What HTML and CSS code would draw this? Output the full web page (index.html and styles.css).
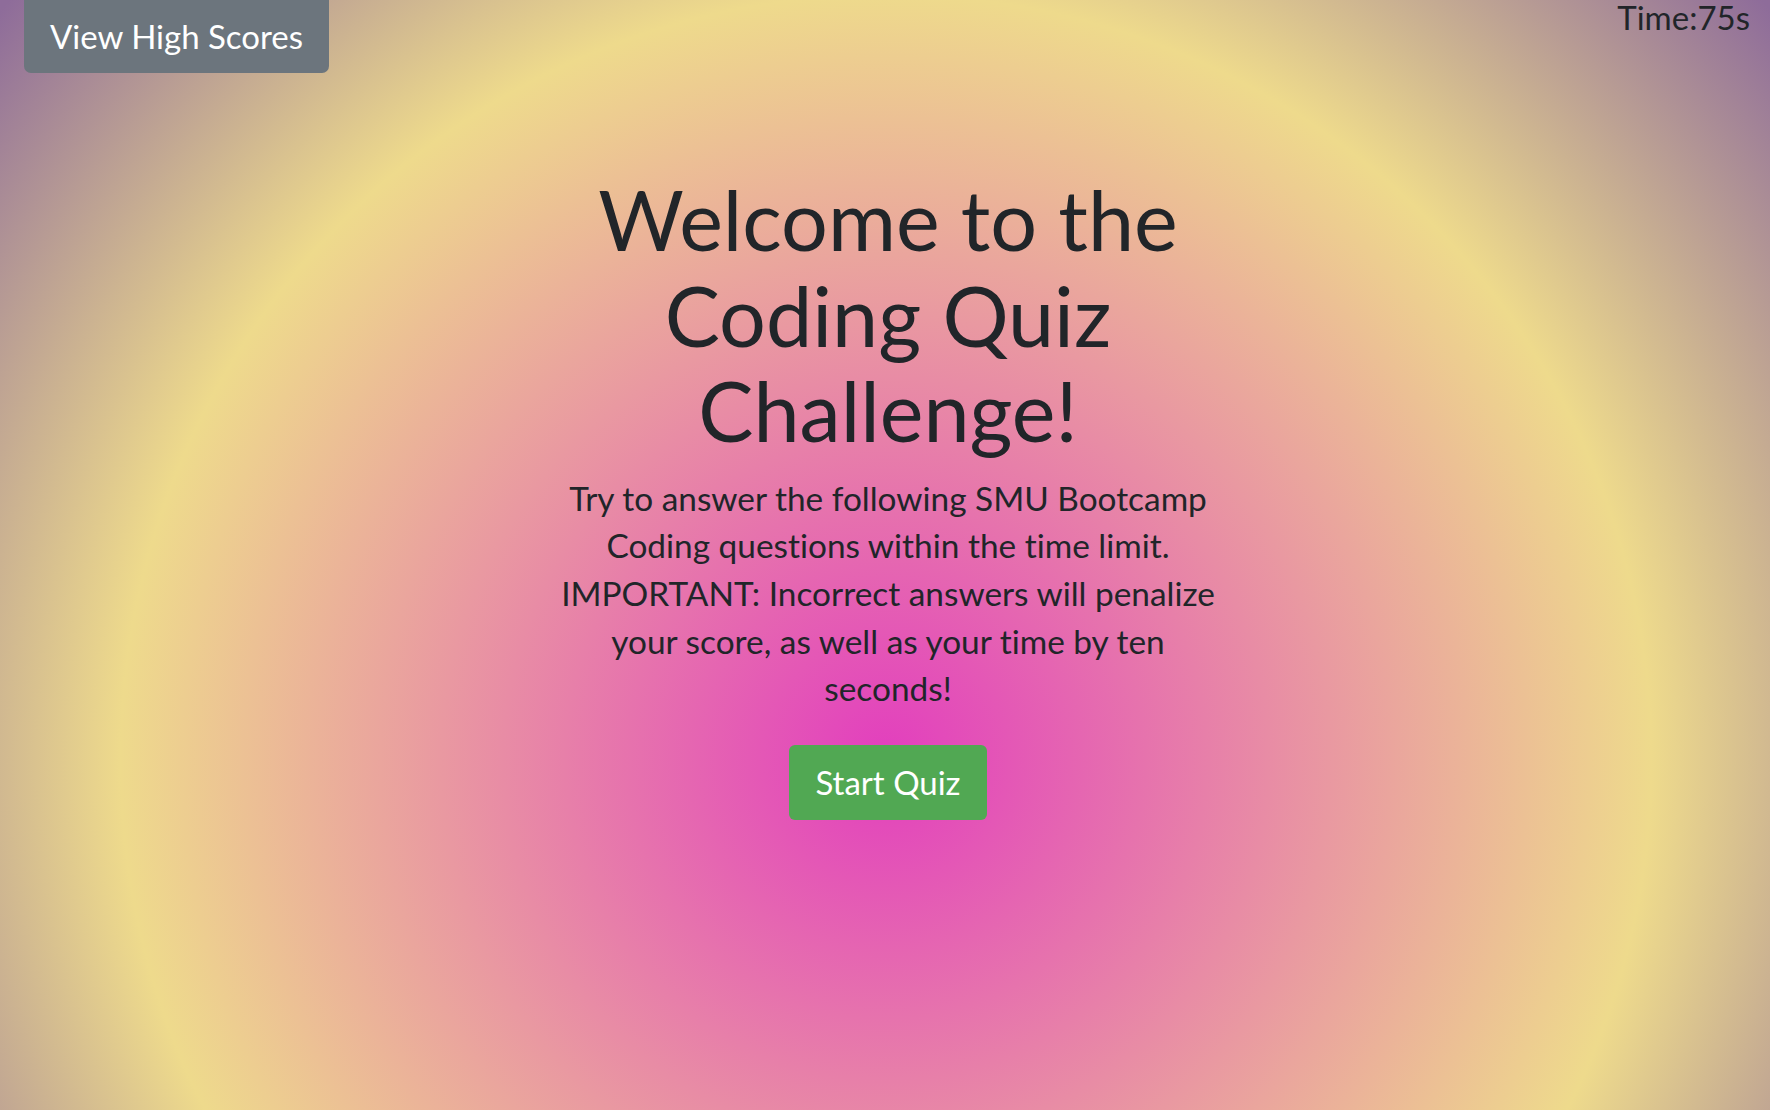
FILE: index.html
```html
<!DOCTYPE html>
<html lang="en">
<head>
<meta charset="utf-8">
<title>Coding Quiz Challenge</title>
<link rel="stylesheet" href="styles.css">
</head>
<body>
<header class="topbar">
  <button class="btn btn-scores" type="button">View High Scores</button>
  <div class="timer">Time:75s</div>
</header>
<main class="intro">
  <h1 class="intro-title">Welcome to the Coding Quiz Challenge!</h1>
  <p class="intro-text">Try to answer the following SMU Bootcamp Coding questions within the time limit. IMPORTANT: Incorrect answers will penalize your score, as well as your time by ten seconds!</p>
  <button class="btn btn-start" type="button">Start Quiz</button>
</main>
</body>
</html>
```
FILE: styles.css
```css
html {
  height: 100%;
}

body {
  margin: 0;
  min-height: 100%;
  font-family: "Lato", "Roboto", sans-serif;
  font-size: 33.4px;
  line-height: 47.7px;
  font-variant-ligatures: none;
  font-feature-settings: "liga" 0, "clig" 0;
  color: #212529;
  background: radial-gradient(circle 1160px at 886px 760px, #e23ebe 0%, #eeda8c 66%, #8e6c9a 100%) no-repeat;
  background-color: #8e6c9a;
}

.topbar {
  display: flex;
  justify-content: space-between;
  align-items: flex-start;
  padding: 0 20px 0 24px;
}

.btn {
  font-family: inherit;
  font-size: 33px;
  line-height: 49px;
  color: #ffffff;
  border: none;
  cursor: pointer;
  font-variant-ligatures: none;
}

.btn-scores {
  width: 305px;
  padding: 12px 0;
  background: #6c757d;
  border-radius: 0 0 7px 7px;
}

.timer {
  font-size: 33px;
  line-height: 34px;
}

.intro {
  width: 680px;
  margin: 0 auto;
  padding: 99px 0 0 6px;
  display: flex;
  flex-direction: column;
  align-items: center;
  text-align: center;
}

.intro-title {
  margin: 0;
  font-size: 82.7px;
  font-weight: 400;
  line-height: 95.5px;
}

.intro-text {
  margin: 16px 0 0;
}

.btn-start {
  margin-top: 32px;
  width: 198px;
  padding: 13px 0;
  background: #51a853;
  border-radius: 6px;
}
```
